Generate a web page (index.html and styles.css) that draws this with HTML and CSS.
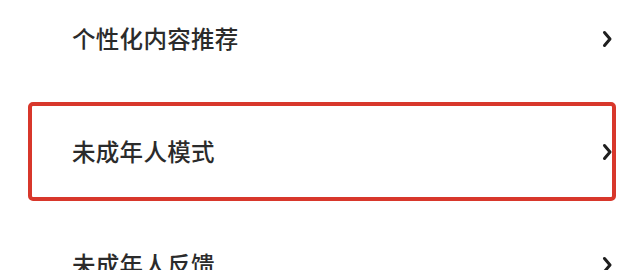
FILE: index.html
```html
<!DOCTYPE html>
<html lang="zh-CN">
<head>
<meta charset="utf-8">
<title>设置</title>
<link rel="stylesheet" href="styles.css">
</head>
<body>
<ul class="menu">
  <li class="row">
    <span class="label">个性化内容推荐</span>
    <svg class="chev" viewBox="0 0 10 18" width="10" height="18"><path d="M2.5 2.5 L8 9 L2.5 15.5"/></svg>
  </li>
  <li class="row row-selected">
    <span class="label">未成年人模式</span>
    <svg class="chev" viewBox="0 0 10 18" width="10" height="18"><path d="M2.5 2.5 L8 9 L2.5 15.5"/></svg>
  </li>
  <li class="row">
    <span class="label">未成年人反馈</span>
    <svg class="chev" viewBox="0 0 10 18" width="10" height="18"><path d="M2.5 2.5 L8 9 L2.5 15.5"/></svg>
  </li>
</ul>
</body>
</html>
```
FILE: styles.css
```css
html, body {
  margin: 0;
  padding: 0;
  background: #ffffff;
  height: 270px;
  overflow: hidden;
}
.menu {
  list-style: none;
  margin: -11px 0 0 0;
  padding: 0 22px 0 28px;
  display: flex;
  flex-direction: column;
  gap: 14px;
  font-family: "Noto Sans CJK SC", "Noto Sans", sans-serif;
}
.row {
  box-sizing: border-box;
  height: 99px;
  display: flex;
  align-items: center;
  justify-content: space-between;
  border: 4px solid transparent;
  border-radius: 5px;
  padding: 0 0 0 40px;
}
.row-selected {
  border-color: #d8372b;
}
.label {
  font-size: 23.5px;
  font-weight: 500;
  color: #2b2b2b;
  letter-spacing: 0.3px;
  line-height: 1;
}
.chev {
  display: block;
  margin-right: 0;
}
.chev path {
  fill: none;
  stroke: #1f1f1f;
  stroke-width: 3;
  stroke-linecap: round;
  stroke-linejoin: round;
}
```
